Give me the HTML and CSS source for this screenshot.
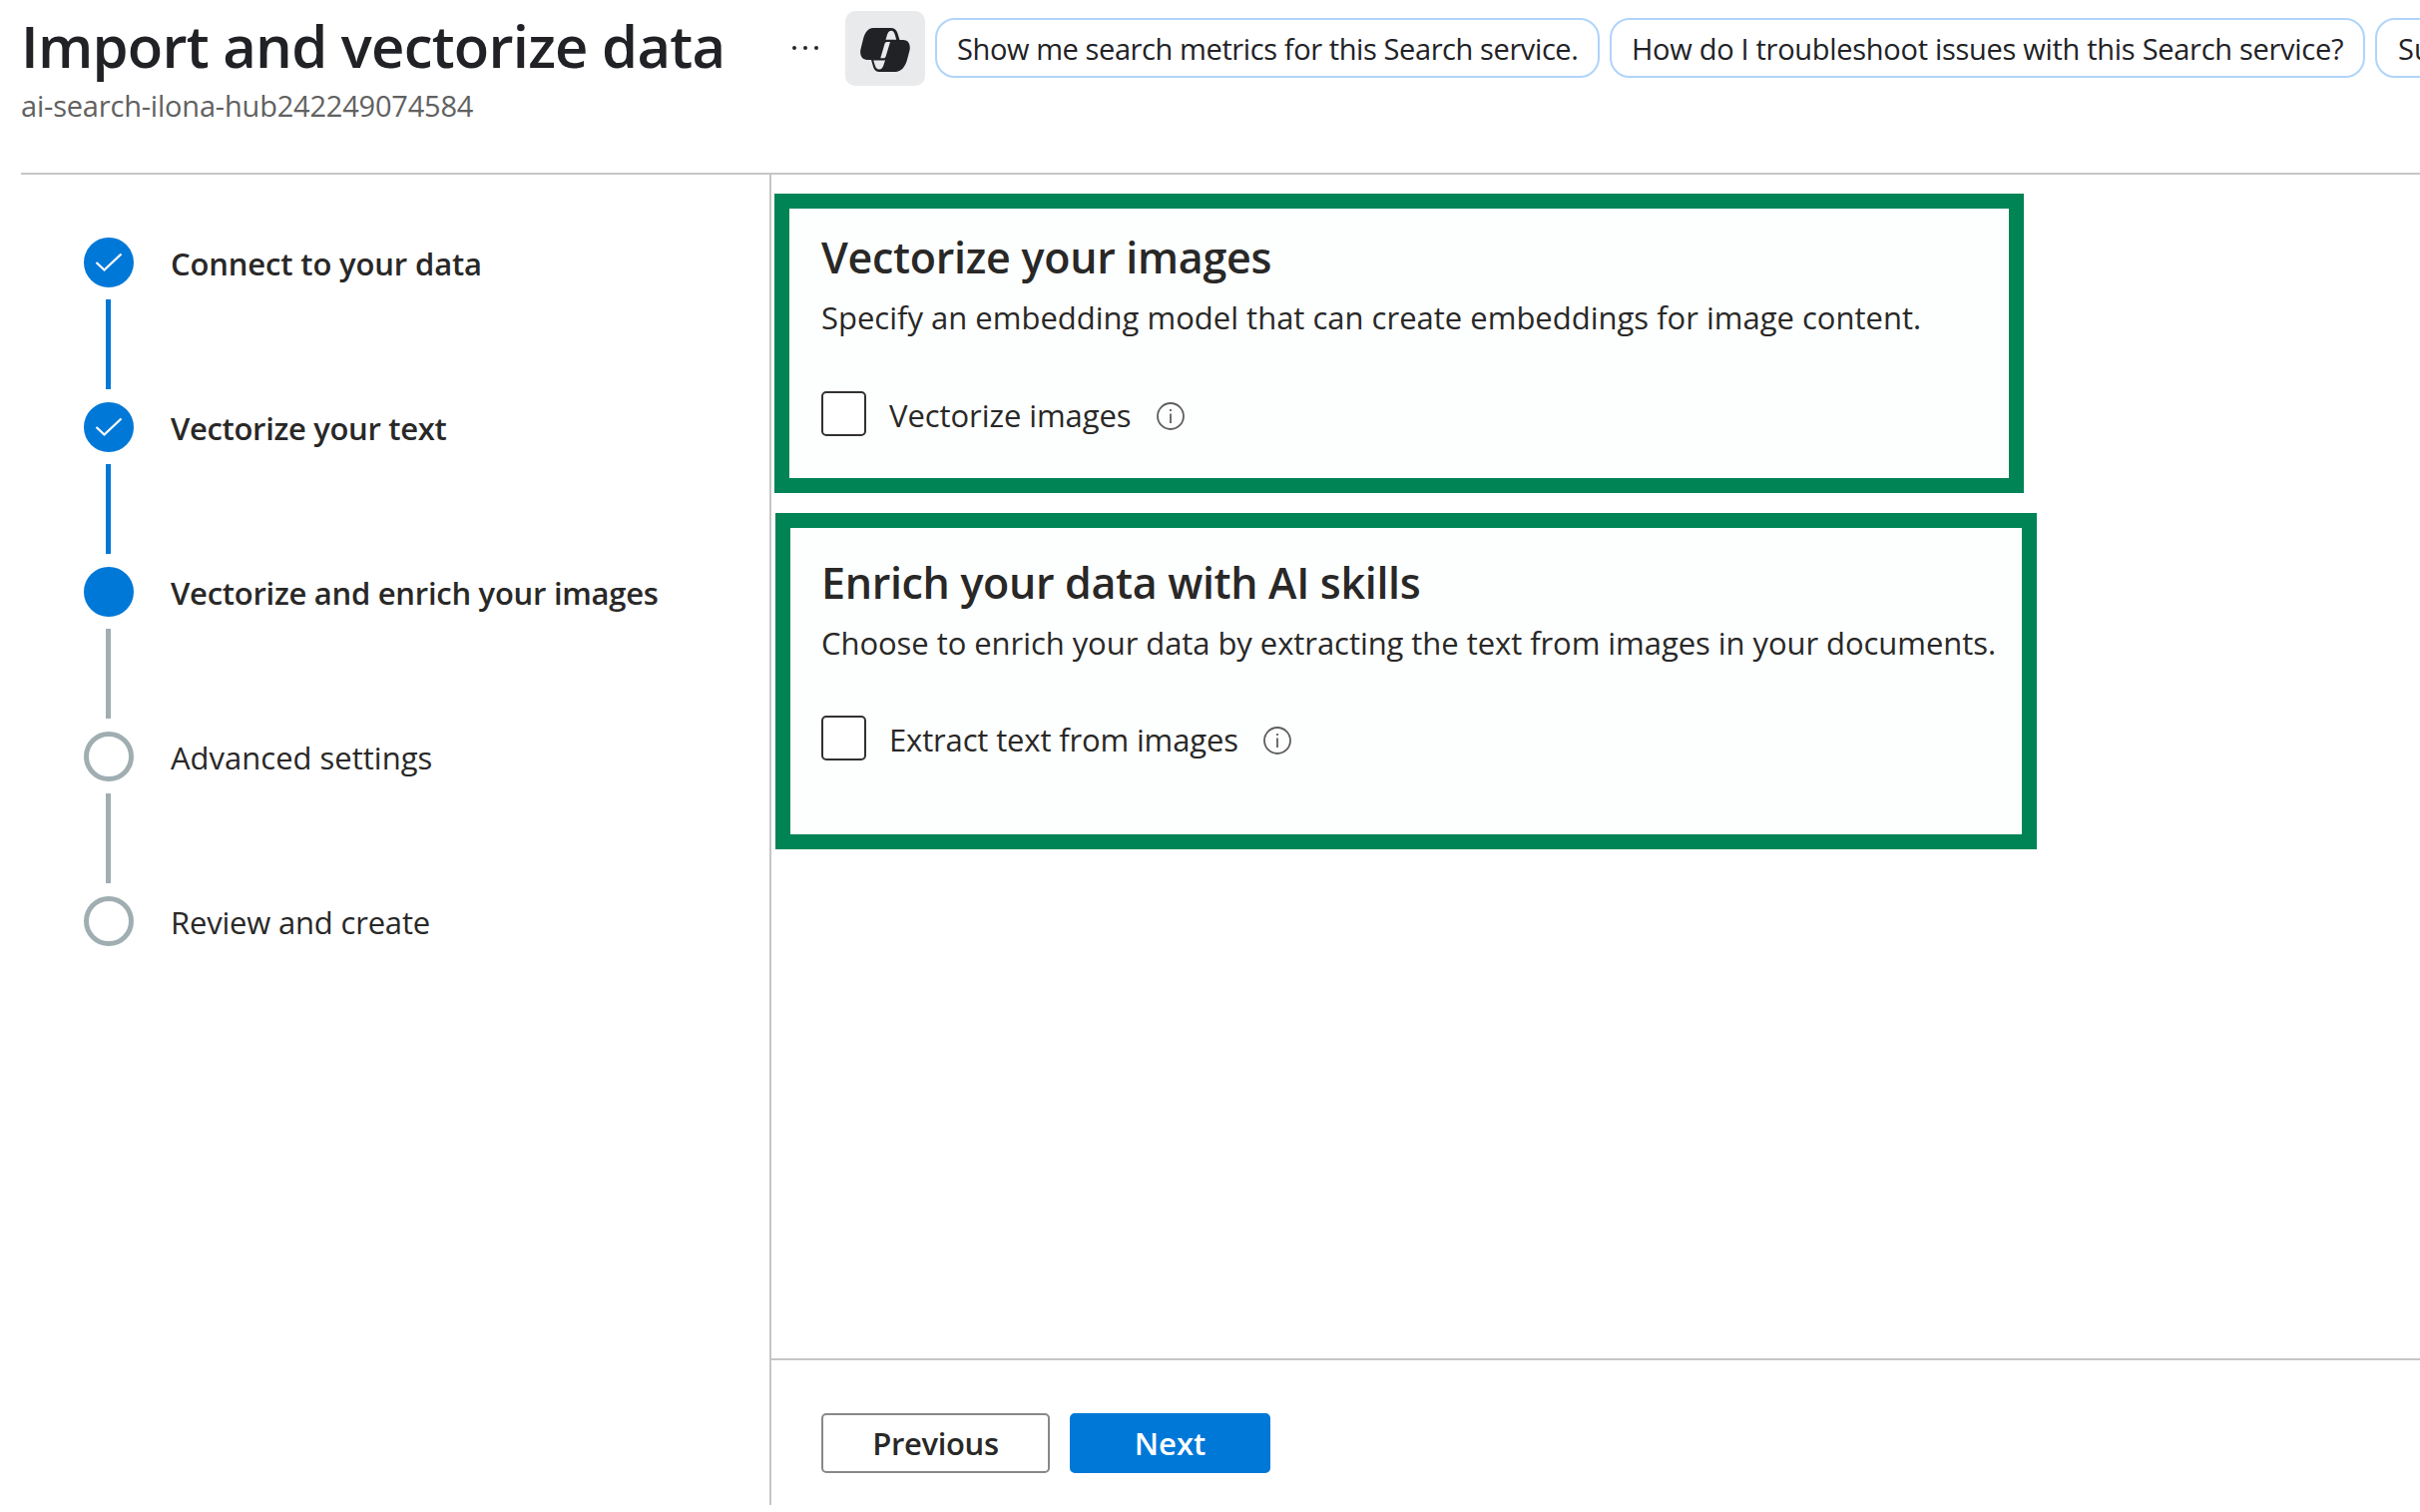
FILE: index.html
```html
<!DOCTYPE html>
<html lang="en">
<head>
<meta charset="utf-8">
<title>Import and vectorize data</title>
<link rel="stylesheet" href="styles.css">
</head>
<body>
<div class="page">
  <header class="header">
    <div class="heading">
      <h1 class="title">Import and vectorize data</h1>
      <p class="subtitle">ai-search-ilona-hub242249074584</p>
    </div>
    <svg class="more" viewBox="0 0 26 4"><circle cx="2" cy="2" r="2"/><circle cx="13" cy="2" r="2"/><circle cx="24" cy="2" r="2"/></svg>
    <button class="copilot" aria-label="Copilot">
      <svg viewBox="0 0 50 44" width="50" height="44">
        <path fill="#212226" fill-rule="evenodd" d="M13 0H31C35 0 37 3 38 7L39.500 12H43C48 12 50.500 16 49.600 22L47 32C45 39 41 44 35 44H19C15 44 13.500 41 12.500 37L11 32H7C2 32-.5 28 .3 22L3 11C5 4 8 0 13 0ZM25.500 11.800H36.200L35 7.500C34.300 4.500 33 2.700 31 2.700C28.500 2.700 27.500 5 26.800 7.500ZM27 14C25.500 14 24.800 14.800 24.400 16.300L20.300 30.300H23C24.600 30.300 25.400 29.500 25.800 28L30 14ZM13.200 32.500L14.800 37.500C15.600 40.200 17 41.500 19 41.500C21.500 41.500 22.700 39.500 23.500 37L25 32.200C24 32.500 23 32.500 22 32.500Z"/>
      </svg>
    </button>
    <div class="pills">
      <button class="pill pill-metrics">Show me search metrics for this Search service.</button>
      <button class="pill pill-issues">How do I troubleshoot issues with this Search service?</button>
      <button class="pill pill-more">Su</button>
    </div>
  </header>
  <div class="body">
    <nav class="steps">
      <div class="step done"><span class="dot"><svg viewBox="0 0 28 20" width="28" height="20"><path d="M1.500 10L9.500 17.500L26.500 1.500" fill="none" stroke="#fff" stroke-width="2.300"/></svg></span><span class="label label-connect">Connect to your data</span></div>
      <div class="step done"><span class="dot"><svg viewBox="0 0 28 20" width="28" height="20"><path d="M1.500 10L9.500 17.500L26.500 1.500" fill="none" stroke="#fff" stroke-width="2.300"/></svg></span><span class="label label-text">Vectorize your text</span></div>
      <div class="step current"><span class="dot"></span><span class="label label-images">Vectorize and enrich your images</span></div>
      <div class="step"><span class="dot"></span><span class="label">Advanced settings</span></div>
      <div class="step"><span class="dot"></span><span class="label label-review">Review and create</span></div>
    </nav>
    <main class="main">
      <div class="content">
        <section class="card card-vectorize">
          <h2>Vectorize your images</h2>
          <p>Specify an embedding model that can create embeddings for image content.</p>
          <div class="option"><span class="box"></span><span class="option-label">Vectorize images</span>
            <svg class="info" viewBox="0 0 28 28"><circle cx="14" cy="14" r="13"/><path d="M14 11.500V21M14 7V9"/></svg></div>
        </section>
        <section class="card card-enrich">
          <h2>Enrich your data with AI skills</h2>
          <p>Choose to enrich your data by extracting the text from images in your documents.</p>
          <div class="option"><span class="box"></span><span class="option-label">Extract text from images</span>
            <svg class="info" viewBox="0 0 28 28"><circle cx="14" cy="14" r="13"/><path d="M14 11.500V21M14 7V9"/></svg></div>
        </section>
      </div>
      <footer class="footer">
        <button class="btn prev">Previous</button>
        <button class="btn next">Next</button>
      </footer>
    </main>
  </div>
</div>
</body>
</html>
```
FILE: styles.css
```css
* { box-sizing: border-box; }
body { margin: 0; background: #fff; color: #292827; font-family: "Open Sans", "Noto Sans", sans-serif; font-size: 31px; }
h1, h2, p { margin: 0; white-space: nowrap; }
button { font: inherit; color: inherit; padding: 0; }
.page { width: 2425px; height: 1515px; overflow: hidden; display: flex; flex-direction: column; padding-left: 21px; }

/* Header */
.header { height: 175px; flex: none; display: flex; align-items: flex-start; border-bottom: 2px solid #c6c6c6; }
.heading { width: 773px; flex: none; }
.title { font-size: 58px; font-weight: 600; line-height: 80px; padding-top: 6px; color: #212226; letter-spacing: -0.77px; }
.subtitle { font-size: 29px; line-height: 40px; color: #616161; letter-spacing: -0.2px; }
.more { width: 26px; height: 4px; margin-top: 46px; fill: #292827; flex: none; }
.copilot { width: 80px; height: 75px; margin: 11px 10px 0 27px; border: 0; border-radius: 10px; background: #e9eaeb; display: flex; align-items: center; justify-content: center; flex: none; }
.copilot svg { margin-top: 3px; }
.pills { display: flex; gap: 10px; padding-top: 18px; }
.pill { height: 60px; flex: none; border: 2px solid #b0d4fb; border-radius: 20px; background: #fff; font-size: 29px; line-height: 54px; padding: 2px 0 0 20px; text-align: left; white-space: nowrap; color: #212226; }
.pill-metrics { width: 666px; letter-spacing: -0.4px; }
.pill-issues { width: 757px; letter-spacing: -0.29px; }
.pill-more { width: 300px; padding-left: 21px; }

/* Wizard steps */
.body { height: 1333px; display: flex; }
.steps { width: 750px; padding: 63px 0 0 63px; display: flex; flex-direction: column; }
.step { height: 165px; display: grid; grid-template-columns: 50px 1fr; grid-template-rows: 50px 90px; column-gap: 37px; row-gap: 12px; }
.step:not(:last-child)::after { content: ""; width: 5px; background: #a0aeb2; margin-left: 22px; }
.step.done::after { background: #0078d7; }
.dot { width: 50px; height: 50px; border: 5px solid #a0aeb2; border-radius: 50%; display: flex; align-items: center; justify-content: center; }
.dot svg { flex: none; width: 28px; }
.done .dot, .current .dot { background: #0078d7; border-color: #0078d7; }
.label { line-height: 52px; white-space: nowrap; }
.done .label, .current .label { font-weight: 600; }
.label-connect { letter-spacing: -0.15px; }
.label-text { letter-spacing: -0.33px; }
.label-images { letter-spacing: -0.27px; }
.label-review { letter-spacing: -0.19px; }

/* Main panel */
.main { flex: 1; border-left: 2px solid #c6c6c6; display: flex; flex-direction: column; }
.content { flex: 1; padding: 19px 0 0 3px; }
.card { border: 15px solid #008456; background: #fdfffe; }
.card-vectorize { width: 1252px; height: 300px; padding: 19px 0 0 32px; }
.card-enrich { width: 1264px; height: 337px; margin: 20px 0 0 1px; padding: 25px 0 0 31px; }
h2 { font-size: 43px; font-weight: 600; line-height: 60px; letter-spacing: -0.28px; }
.card-enrich h2 { letter-spacing: -0.33px; }
.card p { line-height: 50px; margin-top: 5px; }
.card-enrich p { letter-spacing: -0.06px; }
.option { display: flex; align-items: center; height: 45px; margin-top: 49px; }
.card-enrich .option { margin-top: 48px; }
.box { width: 45px; height: 45px; border: 2px solid #323130; border-radius: 5px; background: #fff; margin-right: 23px; }
.option-label { padding-top: 3px; letter-spacing: -0.07px; }
.card-enrich .option-label { letter-spacing: -0.15px; }
.info { width: 28px; height: 28px; margin: 5px 0 0 25px; fill: none; stroke: #605e5c; stroke-width: 1.8; }

/* Footer */
.footer { height: 147px; border-top: 2px solid #c6c6c6; display: flex; gap: 20px; padding: 53px 0 0 50px; }
.btn { height: 60px; border: 2px solid #8a8886; border-radius: 5px; background: #fff; font-weight: 600; line-height: 56px; }
.prev { width: 229px; letter-spacing: -0.35px; }
.next { width: 201px; background: #0078d7; border-color: #0078d7; color: #fff; }
```
